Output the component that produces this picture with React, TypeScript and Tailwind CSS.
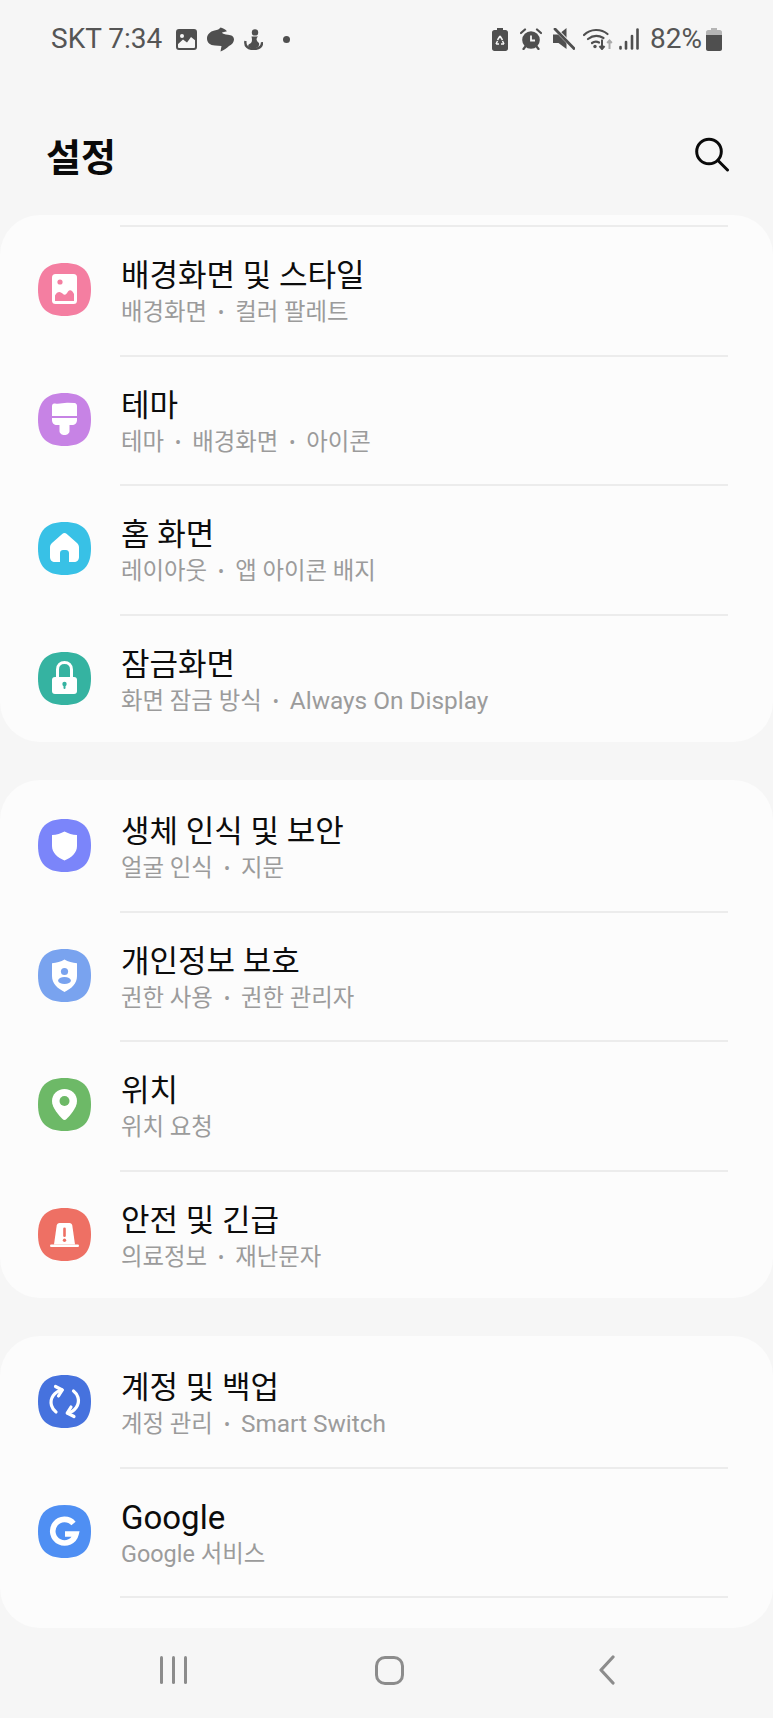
import React from "react";

const BLOB = "M26.5 0C44.5 0 53 8.5 53 26.5C53 44.5 44.5 53 26.5 53C8.5 53 0 44.5 0 26.5C0 8.5 8.5 0 26.5 0Z";

function AppIcon({ color, children }: { color: string; children: React.ReactNode }) {
  return (
    <svg width="53" height="53" viewBox="0 0 53 53" className="shrink-0">
      <path d={BLOB} fill={color} />
      {children}
    </svg>
  );
}

const icons: Record<string, React.ReactNode> = {
  wallpaper: (
    <AppIcon color="#f47ea1">
      <rect x="14" y="11" width="25" height="30" rx="3.5" fill="#fff" />
      <circle cx="22" cy="19" r="2.6" fill="#f47ea1" />
      <path d="M17 38V32.5C19 28.5 22 28 24.5 30.5C27 33 28.5 31 30 28.5C32 26 34.5 27.5 36 31V38Z" fill="#f47ea1" />
    </AppIcon>
  ),
  theme: (
    <AppIcon color="#c783e5">
      <path d="M14 13C14 11 15.5 10.5 17 10.5C22 11.5 25 9.5 30 9.8L36.5 10C38 10.2 39 11.2 39 13V23H14Z" fill="#fff" />
      <path d="M14 25H39V27C39 30 37 32 34 32H31.5V38C31.5 40.5 29 42 26.5 42C24 42 21.5 40.5 21.5 38V32H19C16 32 14 30 14 27Z" fill="#fff" />
    </AppIcon>
  ),
  home: (
    <AppIcon color="#38c1e6">
      <path d="M24.2 12C25.6 10.8 27.4 10.8 28.8 12L39 21C40.3 22.2 41 23.8 41 25.5V35C41 38 39 40 36 40H31V31C31 29 29.5 28 28 28H25C23.5 28 22 29 22 31V40H17C14 40 12 38 12 35V25.5C12 23.8 12.7 22.2 14 21Z" fill="#fff" />
    </AppIcon>
  ),
  lock: (
    <AppIcon color="#35b3a1">
      <path d="M19.5 27V17.5C19.5 13 22.5 10.5 26.5 10.5C30.5 10.5 33.5 13 33.5 17.5V27" fill="none" stroke="#fff" strokeWidth="3" />
      <rect x="14" y="25" width="25" height="17" rx="3" fill="#fff" />
      <circle cx="26.5" cy="32" r="2.2" fill="#35b3a1" />
      <rect x="25.5" y="32" width="2" height="5" rx="1" fill="#35b3a1" />
    </AppIcon>
  ),
  shield: (
    <AppIcon color="#7b85fa">
      <path d="M26.5 12.5C30 14.5 34.5 15.8 39 16V27C39 34 33.5 38.5 26.5 41.5C19.5 38.5 14 34 14 27V16C18.5 15.8 23 14.5 26.5 12.5Z" fill="#fff" />
    </AppIcon>
  ),
  privacy: (
    <AppIcon color="#79a3ef">
      <path d="M26.5 10.5C30 12.5 34.5 14 39 14.2V27C39 34.5 33.5 39.5 26.5 43C19.5 39.5 14 34.5 14 27V14.2C18.5 14 23 12.5 26.5 10.5Z" fill="#fff" />
      <circle cx="26.5" cy="22.5" r="3.6" fill="#79a3ef" />
      <ellipse cx="26.5" cy="31.5" rx="6.4" ry="3.6" fill="#79a3ef" />
    </AppIcon>
  ),
  location: (
    <AppIcon color="#6db967">
      <path d="M26.5 11C33.5 11 39 16 39 23C39 30 32 37.5 28.5 41C27.3 42.2 25.7 42.2 24.5 41C21 37.5 14 30 14 23C14 16 19.5 11 26.5 11Z" fill="#fff" />
      <circle cx="26.5" cy="23" r="5" fill="#6db967" />
    </AppIcon>
  ),
  safety: (
    <AppIcon color="#ee7064">
      <path d="M21.5 15H31.5C33 15 34 16 34.3 17.5L37 36.5H16L18.7 17.5C19 16 20 15 21.5 15Z" fill="#fff" />
      <rect x="12" y="36.5" width="29" height="2.6" rx="1.3" fill="#fff" />
      <rect x="25.2" y="19.5" width="2.6" height="9.5" rx="1.3" fill="#ee7064" />
      <circle cx="26.5" cy="32.2" r="1.7" fill="#ee7064" />
    </AppIcon>
  ),
  sync: (
    <AppIcon color="#4672de">
      <g fill="none" stroke="#fff" strokeWidth="3.2" strokeLinecap="round" strokeLinejoin="round">
        <path d="M24 15C16.5 16.5 11.5 23.5 13.5 30.5C14.3 33.3 16 35.5 18 37" />
        <path d="M17.5 11.5L24.3 15L20.5 21" />
        <path d="M29.5 38C37 36.5 42 29.5 40 22.5C39.2 19.7 37.5 17.5 35.5 16" />
        <path d="M36 41.5L29.2 38L33 32" />
      </g>
    </AppIcon>
  ),
  google: (
    <AppIcon color="#4f8ff3">
      <path d="M35.5 18.5A11.8 11.8 0 1 0 38 29H27" fill="none" stroke="#fff" strokeWidth="5.6" />
    </AppIcon>
  ),
};

type Row = { icon: string; title: string; sub: string[] };

const groups: { rows: Row[]; cls: string; topDivider?: boolean; endDivider?: boolean }[] = [
  {
    cls: "pt-[10px]",
    topDivider: true,
    rows: [
      { icon: "wallpaper", title: "배경화면 및 스타일", sub: ["배경화면", "컬러 팔레트"] },
      { icon: "theme", title: "테마", sub: ["테마", "배경화면", "아이콘"] },
      { icon: "home", title: "홈 화면", sub: ["레이아웃", "앱 아이콘 배지"] },
      { icon: "lock", title: "잠금화면", sub: ["화면 잠금 방식", "Always On Display"] },
    ],
  },
  {
    cls: "pt-[3px]",
    rows: [
      { icon: "shield", title: "생체 인식 및 보안", sub: ["얼굴 인식", "지문"] },
      { icon: "privacy", title: "개인정보 보호", sub: ["권한 사용", "권한 관리자"] },
      { icon: "location", title: "위치", sub: ["위치 요청"] },
      { icon: "safety", title: "안전 및 긴급", sub: ["의료정보", "재난문자"] },
    ],
  },
  {
    cls: "pt-[3px] pb-[30px]",
    endDivider: true,
    rows: [
      { icon: "sync", title: "계정 및 백업", sub: ["계정 관리", "Smart Switch"] },
      { icon: "google", title: "Google", sub: ["Google 서비스"] },
    ],
  },
];

function Divider() {
  return <div className="ml-[120px] mr-[45px] h-[2px] bg-[#ececec]" />;
}

function SettingRow({ row, short }: { row: Row; short: boolean }) {
  return (
    <div className={`flex items-start pl-[38px] pt-[36px] ${short ? "h-[126px]" : "h-[127.5px]"}`}>
      {icons[row.icon]}
      <div className="ml-[30px] -mt-[8px] min-w-0">
        <div className={`leading-[42px] text-[#0c0c0c] ${/^[A-Za-z]+$/.test(row.title) ? "text-[33px]" : "text-[31px]"}`}>{row.title}</div>
        <div className="text-[23.4px] leading-[30px] text-[#9b9b9b] whitespace-nowrap">
          {row.sub.map((s, i) => (
            <React.Fragment key={s}>
              {i > 0 && <span className="mx-[11px] text-[18px] relative -top-[1px]">•</span>}
              <span className={/^[A-Za-z ]+$/.test(s) ? "text-[24.4px]" : ""}>{s}</span>
            </React.Fragment>
          ))}
        </div>
      </div>
    </div>
  );
}

function LeftStatusIcons() {
  return (
    <div className="flex items-center ml-[14px]">
      <svg width="21" height="21" viewBox="0 0 21 21">
        <rect x="1" y="1" width="19" height="19" rx="2" fill="none" stroke="#4f4f4f" strokeWidth="2" />
        <path d="M1 16L7 10.5L11 13.5L15 8L20 12V2H1Z" fill="#4f4f4f" />
        <circle cx="6" cy="7" r="2" fill="#f6f6f6" />
      </svg>
      <svg width="27" height="25" viewBox="0 0 27 25" className="ml-[10px]">
        <path d="M13.5 0.5C12.5 2 10.5 3 7.5 3.5C3 4.5 0 7.5 0 11.5C0 15.5 3 18.5 8 18.5L14.5 19L13.5 24.5C16.5 23.5 19.5 21.5 22 19C25 17.5 27 15 27 12.5C27 9.5 24.5 8 21 7.8C18 7.5 15.5 7 15 5.5L20 4.2C18 2.2 15.5 1 13.5 0.5Z" fill="#4f4f4f" />
      </svg>
      <svg width="19" height="21" viewBox="0 0 19 21" className="ml-[10px]">
        <circle cx="11" cy="3.4" r="3.2" fill="#4f4f4f" />
        <path d="M7.5 7.5H14C12 9.5 12 11 14.5 13.5C16 15 15 18 12 19H7C3 18 3.5 15.5 7 14C8.5 12 8 10 7.5 7.5Z" fill="#4f4f4f" />
        <path d="M1.5 12C0.5 17 4 20 9.5 20C15.5 20 18.5 17 18 13" fill="none" stroke="#4f4f4f" strokeWidth="2.4" />
      </svg>
      <span className="ml-[20px] w-[7px] h-[7px] rounded-full bg-[#4f4f4f]" />
    </div>
  );
}

function RightStatusIcons() {
  return (
    <div className="flex items-center">
      <svg width="16" height="23" viewBox="0 0 16 23">
        <path d="M5 0H11V2H13.5C15 2 16 3 16 4.5V20.5C16 22 15 23 13.5 23H2.5C1 23 0 22 0 20.5V4.5C0 3 1 2 2.5 2H5Z" fill="#4f4f4f" />
        <path d="M8 8L10.5 12M8 8L5.5 12M4 16H7M12 16H9M4 16L5.5 13M12 16L10.5 13" stroke="#f6f6f6" strokeWidth="1.5" fill="none" />
      </svg>
      <svg width="22" height="22" viewBox="0 0 22 22" className="ml-[12px]">
        <circle cx="11" cy="12" r="8.8" fill="#4f4f4f" />
        <path d="M11 7.5V12.5H15" fill="none" stroke="#f6f6f6" strokeWidth="1.8" />
        <path d="M1 5L5 1.5M21 5L17 1.5M5 19L3.5 21M17 19L18.5 21" stroke="#4f4f4f" strokeWidth="2.2" strokeLinecap="round" />
      </svg>
      <svg width="22" height="22" viewBox="0 0 22 22" className="ml-[11px]">
        <path d="M0 6.5H5.5L13.5 0V21L5.5 15H0Z" fill="#4f4f4f" />
        <path d="M2 0.5L22 21" stroke="#f6f6f6" strokeWidth="4" />
        <path d="M2 1L21 20.5" stroke="#4f4f4f" strokeWidth="2.8" strokeLinecap="round" />
      </svg>
      <svg width="30" height="22" viewBox="0 0 30 22" className="ml-[8px]">
        <g fill="none" stroke="#4f4f4f" strokeWidth="2.2" strokeLinecap="round">
          <path d="M1 7C7.5 0.5 18 0.5 24.5 6" />
          <path d="M5 11C10 7 15.5 7 20.5 10" />
          <path d="M9 15C11 13.5 14 13.5 16 14.5" />
        </g>
        <circle cx="12" cy="18.5" r="1.7" fill="#4f4f4f" />
        <path d="M19 11.5V20.5M16.5 18L19 21L21.5 18" fill="none" stroke="#4f4f4f" strokeWidth="2" />
        <path d="M26.5 21V12.5M24.2 15L26.5 12.5L28.8 15" fill="none" stroke="#a9a9a9" strokeWidth="2" />
      </svg>
      <svg width="20" height="22" viewBox="0 0 20 22" className="ml-[6px]">
        <g stroke="#4f4f4f" strokeWidth="2.6" strokeLinecap="round">
          <path d="M1.5 20.5V19" />
          <path d="M7 20.5V14" />
          <path d="M13 20.5V8" />
          <path d="M18.5 20.5V1.5" />
        </g>
      </svg>
      <span className="ml-[11px] text-[28px] leading-none text-[#555555]">82%</span>
      <svg width="16" height="23" viewBox="0 0 16 23" className="ml-[4px]">
        <path d="M5 0H11V2H14C15 2 16 3 16 4V7H0V4C0 3 1 2 2 2H5Z" fill="#b5b5b5" />
        <path d="M0 7H16V21C16 22 15 23 14 23H2C1 23 0 22 0 21Z" fill="#4f4f4f" />
      </svg>
    </div>
  );
}

export default function App() {
  return (
    <div className="w-[773px] h-[1718px] overflow-hidden bg-[#f6f6f6] font-[Roboto,'Noto_Sans_CJK_KR',sans-serif]">
      <div className="flex items-center justify-between pl-[51px] pr-[51px] pt-[26px] h-[52px]">
        <div className="flex items-center">
          <span className="text-[28px] leading-none text-[#555555]">SKT 7:34</span>
          <LeftStatusIcons />
        </div>
        <RightStatusIcons />
      </div>
      <div className="flex items-start justify-between h-[163px] pl-[46px] pr-[43px]">
        <h1 className="mt-[81px] text-[38px] leading-[50px] font-semibold text-[#0a0a0a]">설정</h1>
        <svg width="36" height="36" viewBox="0 0 36 36" className="mt-[84px]">
          <circle cx="15" cy="15.5" r="12.3" fill="none" stroke="#0a0a0a" strokeWidth="3" />
          <path d="M24 24.5L33.5 34" stroke="#0a0a0a" strokeWidth="3" strokeLinecap="round" />
        </svg>
      </div>
      <div className="flex flex-col gap-[38.5px]">
        {groups.map((g, gi) => (
          <section key={gi} className={`bg-[#fcfcfc] rounded-[40px] ${g.cls}`}>
            {g.topDivider && <Divider />}
            {g.rows.map((r, i) => {
              const last = i === g.rows.length - 1;
              return (
                <div key={r.icon}>
                  <SettingRow row={r} short={last && !g.endDivider} />
                  {(!last || g.endDivider) && <Divider />}
                </div>
              );
            })}
          </section>
        ))}
      </div>
      <nav className="grid grid-cols-3 pl-[65px] pr-[58px] mt-[27px] h-[30px] items-center justify-items-center">
        <div className="flex gap-[9px]">
          <span className="w-[3px] h-[28px] rounded-full bg-[#8c8c8c]" />
          <span className="w-[3px] h-[28px] rounded-full bg-[#8c8c8c]" />
          <span className="w-[3px] h-[28px] rounded-full bg-[#8c8c8c]" />
        </div>
        <div className="w-[29px] h-[29px] rounded-[10px] border-[3.5px] border-[#8c8c8c]" />
        <svg width="18" height="30" viewBox="0 0 18 30">
          <path d="M15 2L3 15L15 28" fill="none" stroke="#8c8c8c" strokeWidth="3.2" strokeLinecap="round" strokeLinejoin="round" />
        </svg>
      </nav>
    </div>
  );
}
